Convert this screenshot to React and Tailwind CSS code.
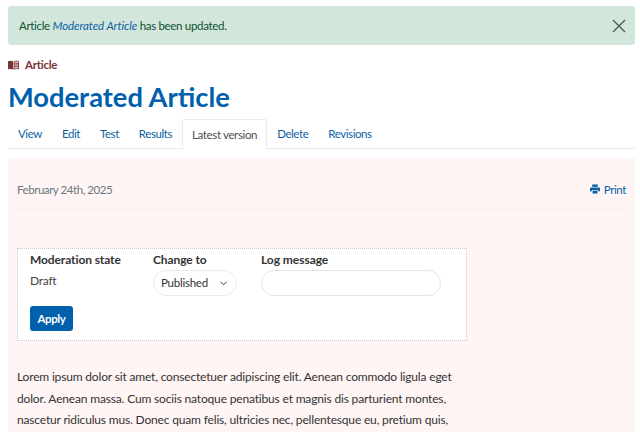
import React from "react";
import { ChevronDown } from "lucide-react";

function BookIcon() {
  return (
    <svg width="11" height="10" viewBox="0 0 11 10" className="shrink-0">
      <path d="M0 1.2 C1.6 0.4 3.6 0.5 5.2 1.4 V9.6 C3.6 8.8 1.6 8.7 0 9.4 Z" fill="#7a3237" />
      <path d="M6.2 1.8 C7.6 1 9.2 0.9 10.5 1.5 V9 C9.2 8.4 7.6 8.5 6.2 9.2 Z" fill="#e8d5d5" stroke="#7a3237" strokeWidth="0.9" />
      <path d="M7 3.4 H10 M7 5 H10 M7 6.6 H10" stroke="#7a3237" strokeWidth="0.8" />
    </svg>
  );
}

function PrintIcon() {
  return (
    <svg width="10" height="10" viewBox="0 0 11 10" className="shrink-0" fill="#0b5fa5">
      <path d="M2.5 0 H8.5 V2.6 H2.5 Z" />
      <path d="M1.2 3.3 H9.8 A1.2 1.2 0 0 1 11 4.5 V7.4 H9 V6 H2 V7.4 H0 V4.5 A1.2 1.2 0 0 1 1.2 3.3 Z" />
      <path d="M2.8 6.8 H8.2 V10 H2.8 Z" />
    </svg>
  );
}

function CloseIcon() {
  return (
    <svg width="14" height="14" viewBox="0 0 14 14" fill="none" stroke="#4f5c55" strokeWidth="1.4" className="shrink-0">
      <path d="M1 1 L13 13 M13 1 L1 13" />
    </svg>
  );
}

export default function App() {
  const tabs = ["View", "Edit", "Test", "Results"];
  return (
    <div className="h-[432px] w-[640px] overflow-hidden bg-white pl-2 pr-[5px] pt-[6px] font-['Lato',sans-serif] text-[11.5px] tracking-[-0.25px] text-[#333]">
      <div className="flex h-[39px] items-center justify-between rounded-[3px] bg-[#d2e6dc] pl-[11px] pr-[9px] text-[#0f5132]">
        <div className="tracking-[-0.32px]">Article <a className="italic tracking-[-0.08px] text-[#0b5fa5]">Moderated Article</a> has been updated.</div>
        <CloseIcon />
      </div>
      <div className="mt-[12px] flex h-[16px] items-center gap-[6px] font-bold text-[#7a3237]">
        <BookIcon />
        <span>Article</span>
      </div>
      <h1 className="mt-[6px] h-[36px] text-[27.3px] leading-[36px] font-bold tracking-normal text-[#0060ac]">Moderated Article</h1>
      <div className="mt-[4px] flex h-[30px] items-stretch border-b border-[#e9ecef] tracking-[-0.42px] text-[#0b5fa5]">
        {tabs.map((t) => (
          <a key={t} className="flex items-center px-[10px]">{t}</a>
        ))}
        <a className="mb-[-1px] flex items-center rounded-t-[2px] border border-b-0 border-[#e9ecef] bg-white px-[9px] tracking-[-0.36px] text-[#495057]">Latest version</a>
        {["Delete", "Revisions"].map((t) => (
          <a key={t} className="flex items-center px-[10px]">{t}</a>
        ))}
      </div>
      <div className="mt-[9px] h-[300px] bg-[#fff5f4] px-[9px]">
        <div className="flex h-[51px] items-end justify-between border-b border-[#f9efed] pb-[10px]">
          <span className="tracking-[-0.45px] text-[#6c757d]">February 24th, 2025</span>
          <a className="flex items-center gap-[4px] tracking-[-0.4px] text-[#0b5fa5]"><PrintIcon />Print</a>
        </div>
        <div className="mt-[39px] h-[93px] w-[450px] border border-dotted border-[#c8c8c8] bg-white pl-[12px] pt-px">
          <div className="flex">
            <div className="w-[123px]">
              <div className="text-[12px] leading-[20px] font-bold tracking-[-0.1px] text-[#333]">Moderation state</div>
              <div className="mt-px text-[12px] leading-[20px] text-[#444]">Draft</div>
            </div>
            <div className="w-[108px]">
              <div className="text-[12px] leading-[20px] font-bold tracking-[-0.1px]">Change to</div>
              <div className="flex h-[26px] w-[84px] items-center justify-between rounded-full border border-[#e9ecef] bg-white pl-[7px] pr-[7px]">Published<ChevronDown size={11} /></div>
            </div>
            <div>
              <div className="text-[12px] leading-[20px] font-bold tracking-[-0.05px]">Log message</div>
              <div className="h-[26px] w-[180px] rounded-full border border-[#e2e4e8] bg-white" />
            </div>
          </div>
          <button className="mt-[10px] block h-[25px] w-[43px] rounded-[3px] bg-[#0060ac] text-center font-bold tracking-[-0.4px] text-white">Apply</button>
        </div>
        <div className="mt-[25px] w-[450px] text-[12px] leading-[21.5px] tracking-[-0.17px] text-[#333]">
          Lorem ipsum dolor sit amet, consectetuer adipiscing elit. Aenean commodo ligula eget dolor. Aenean massa. Cum sociis natoque penatibus et magnis dis parturient montes, nascetur ridiculus mus. Donec quam felis, ultricies nec, pellentesque eu, pretium quis,
        </div>
      </div>
    </div>
  );
}
